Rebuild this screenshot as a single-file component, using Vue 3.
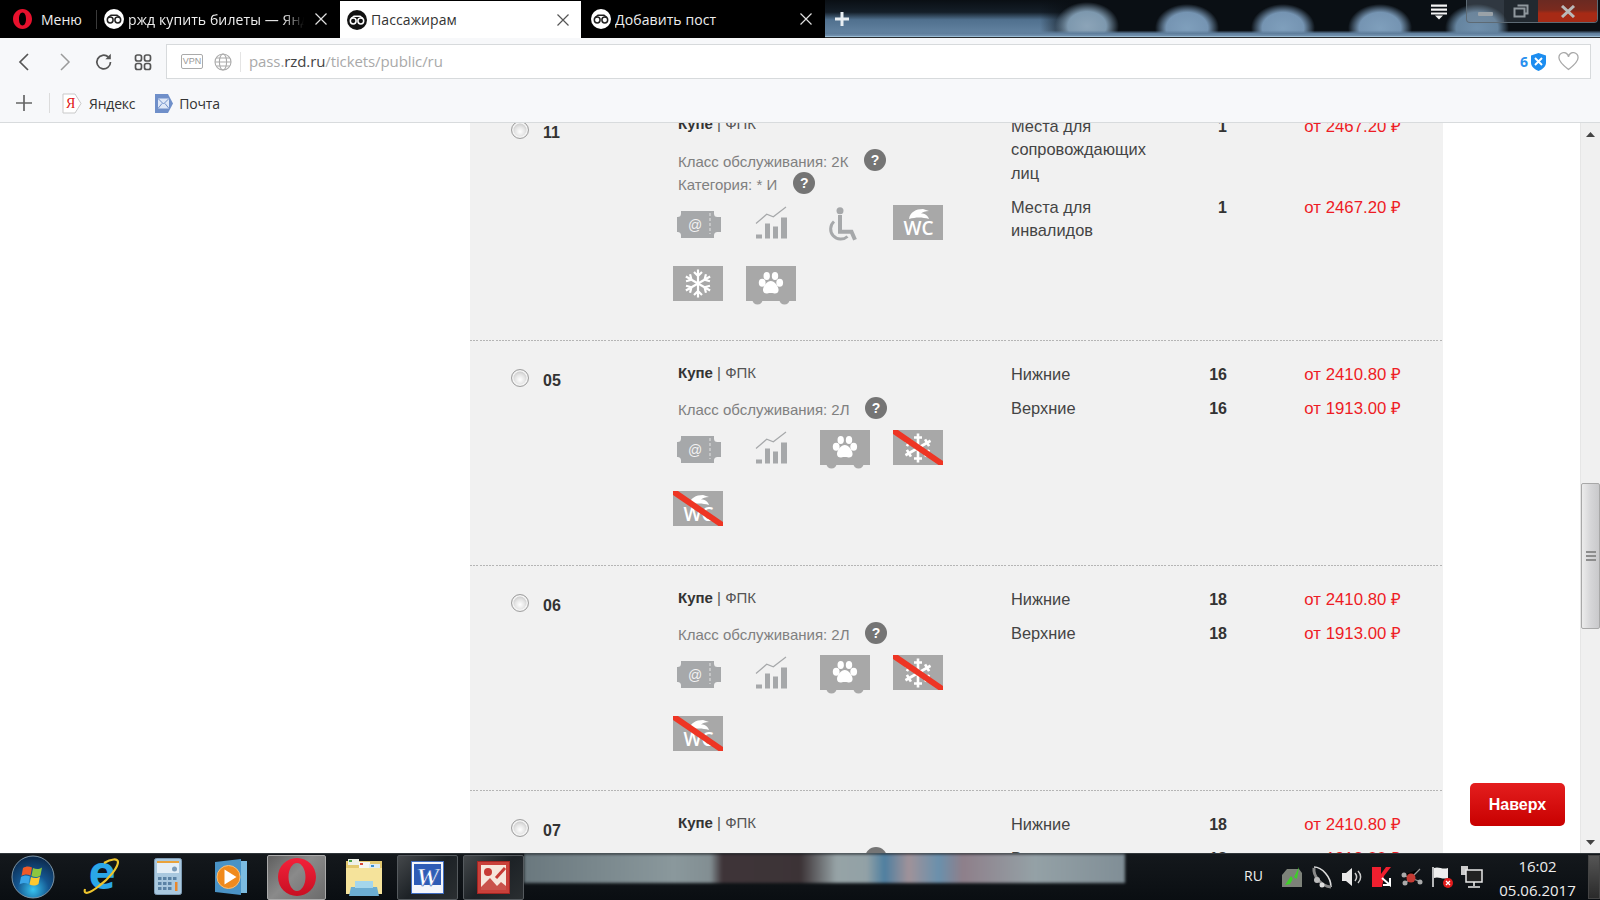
<script setup>
const tabs = [
  { title: 'ржд купить билеты — Янд', cls: 'tab-dark tab-first' },
  { title: 'Пассажирам', cls: 'tab-active' },
  { title: 'Добавить пост', cls: 'tab-dark tab-last' },
]
const rows = [
  {
    no: '11', cat: true, klass: '2К',
    icons: ['ticket', 'chart', 'chair', 'wc', 'snow', 'paw'],
    seats: [
      { name: 'Места для сопровождающих лиц', n: '1', price: 'от 2467.20 ₽' },
      { name: 'Места для инвалидов', n: '1', price: 'от 2467.20 ₽' },
    ],
  },
  {
    no: '05', klass: '2Л',
    icons: ['ticket', 'chart', 'paw', 'nosnow', 'nowc'],
    seats: [
      { name: 'Нижние', n: '16', price: 'от 2410.80 ₽' },
      { name: 'Верхние', n: '16', price: 'от 1913.00 ₽' },
    ],
  },
  {
    no: '06', klass: '2Л',
    icons: ['ticket', 'chart', 'paw', 'nosnow', 'nowc'],
    seats: [
      { name: 'Нижние', n: '18', price: 'от 2410.80 ₽' },
      { name: 'Верхние', n: '18', price: 'от 1913.00 ₽' },
    ],
  },
  {
    no: '07', klass: '2Л',
    icons: ['ticket', 'chart', 'paw', 'nosnow', 'nowc'],
    seats: [
      { name: 'Нижние', n: '18', price: 'от 2410.80 ₽' },
      { name: 'Верхние', n: '18', price: 'от 1913.00 ₽' },
    ],
  },
]
const flakeArms = [0, 60, 120, 180, 240, 300]
</script>

<template>
  <div class="screen">
    <header class="tabstrip">
      <div class="menu">
        <svg width="19" height="20" viewBox="0 0 19 20"><path fill-rule="evenodd" d="M9.500 0C14.700 0 19 4.500 19 10s-4.300 10-9.500 10S0 15.500 0 10 4.300 0 9.500 0zm0 3.500C7.300 3.500 6 6.400 6 10s1.300 6.500 3.500 6.500S13 13.600 13 10s-1.300-6.500-3.500-6.500z" fill="#e8112d"/></svg>
        <span>Меню</span>
        <i class="tab-sep"></i>
      </div>
      <div v-for="t in tabs" :key="t.title" class="tab" :class="t.cls">
        <svg class="fav" width="20" height="20" viewBox="0 0 20 20">
          <circle cx="10" cy="10" r="10" class="fav-bg"/>
          <circle cx="6.200" cy="11" r="2.900" class="fav-eye"/>
          <circle cx="13.800" cy="11" r="2.900" class="fav-eye"/>
          <path d="M4 8.500 7 6.200h6l3 2.300" class="fav-eye"/>
        </svg>
        <span class="tab-title">{{ t.title }}</span>
        <svg class="tab-x" width="14" height="14" viewBox="0 0 14 14"><path d="M1.500 1.500l11 11M12.500 1.500l-11 11" fill="none" stroke-width="1.200"/></svg>
      </div>
      <div class="wall">
        <svg class="newtab" width="14" height="14" viewBox="0 0 14 14"><path d="M7 0v14M0 7h14" stroke="#e8eef2" stroke-width="3"/></svg>
        <svg class="tabmenu" width="18" height="16" viewBox="0 0 18 16"><path d="M1 .5h16v2.200H1zM1 4.500h16v2.200H1zM1 8.500h16v2H1zM5 11.500h8l-4 4z" fill="#f4f4f4"/></svg>
        <div class="winctl">
          <div class="wc-min"><i></i></div>
          <div class="wc-max"><svg width="16" height="14" viewBox="0 0 16 14"><path d="M4.500 1.500h10v8h-2M1.500 4.500h10v8h-10z" fill="none" stroke="#8f979d" stroke-width="2"/></svg></div>
          <div class="wc-close"><svg width="16" height="13" viewBox="0 0 16 13"><path d="M2 1l12 11M14 1 2 12" stroke="#b9b9b9" stroke-width="3"/></svg></div>
        </div>
      </div>
    </header>

    <div class="toolbar">
      <div class="navs">
        <svg width="12" height="18" viewBox="0 0 12 18"><path d="M10 1 2 9l8 8" fill="none" stroke="#555" stroke-width="1.700"/></svg>
        <svg width="12" height="18" viewBox="0 0 12 18"><path d="M2 1l8 8-8 8" fill="none" stroke="#9a9a9a" stroke-width="1.500"/></svg>
        <svg width="18" height="18" viewBox="0 0 18 18"><path d="M15.500 9a6.800 6.800 0 1 1-2.200-5" fill="none" stroke="#555" stroke-width="1.700"/><path d="M15.800 .8v5.400h-5.400z" fill="#555"/></svg>
        <svg width="18" height="18" viewBox="0 0 18 18"><g fill="none" stroke="#555" stroke-width="1.700"><rect x="1.500" y="2" width="6" height="6" rx="2"/><rect x="10.500" y="2" width="6" height="6" rx="2"/><rect x="1.500" y="10.500" width="6" height="6" rx="2"/><rect x="10.500" y="10.500" width="6" height="6" rx="2"/></g></svg>
      </div>
      <div class="address">
        <span class="vpn">VPN</span>
        <svg width="18" height="18" viewBox="0 0 18 18"><g fill="none" stroke="#aaa" stroke-width="1.100"><circle cx="9" cy="9" r="8"/><ellipse cx="9" cy="9" rx="3.600" ry="8"/><path d="M1 9h16M2.200 5h13.600M2.200 13h13.600"/></g></svg>
        <i class="addr-sep"></i>
        <span class="url">pass.<b>rzd.ru</b>/tickets/public/ru</span>
        <span class="badge-n">6</span>
        <svg width="15" height="18" viewBox="0 0 15 18"><path d="M7.500 0 15 2.500v7c0 4-3.200 6.800-7.500 8.500C3.200 16.300 0 13.500 0 9.500v-7z" fill="#1c8df0"/><path d="M4 5l7 7M11 5l-7 7" stroke="#fff" stroke-width="1.900"/></svg>
        <svg class="heart" width="21" height="19" viewBox="0 0 21 19"><path d="M10.500 17.500C4 12.500 1 9.500 1 6a4.700 4.700 0 0 1 9.500-1.200A4.700 4.700 0 0 1 20 6c0 3.500-3 6.500-9.500 11.500z" fill="none" stroke="#a9a9a9" stroke-width="1.300"/></svg>
      </div>
    </div>

    <div class="bookmarks">
      <svg width="16" height="16" viewBox="0 0 16 16"><path d="M8 0v16M0 8h16" stroke="#666" stroke-width="1.700"/></svg>
      <i class="bm-sep"></i>
      <div class="bm">
        <svg width="20" height="21" viewBox="0 0 20 21"><path d="M1 1h12l6 9.500-6 9.500H1z" fill="#fff" stroke="#c9c9c9"/></svg>
        <em class="ya">Я</em>
        <span>Яндекс</span>
      </div>
      <div class="bm bm-mail">
        <svg width="20" height="21" viewBox="0 0 20 21"><path d="M1 1h13l5 9.500-5 9.500H1z" fill="#6f8fc9"/><rect x="4" y="5.500" width="11" height="10" fill="#dfe8f7"/><path d="M4 5.500l5.500 5.500L15 5.500M4 15.500 8 10.500M15 15.500l-4-5" fill="none" stroke="#6f8fc9"/></svg>
        <span>Почта</span>
      </div>
    </div>

    <main class="viewport">
      <div class="page">
        <div class="list">
          <section v-for="r in rows" :key="r.no" class="row">
            <div class="car">
              <i class="radio"></i>
              <b class="car-no">{{ r.no }}</b>
            </div>
            <div class="info">
              <p class="title"><b>Купе</b> | ФПК</p>
              <p class="klass">
                <span>Класс обслуживания: {{ r.klass }}</span>
                <i class="help">?</i>
              </p>
              <p v-if="r.cat" class="klass cat">
                <span>Категория: * И</span>
                <i class="help">?</i>
              </p>
              <div class="icons">
                <div v-for="ic in r.icons" :key="ic" class="ic">
                  <svg width="50" height="40" viewBox="0 0 50 40">
                    <template v-if="ic === 'ticket'">
                      <path d="M8 6h33v2.500a3.500 3.500 0 0 0 3.500 3.500H48v15h-3.500a3.500 3.500 0 0 0-3.500 3.500V33H8v-2.500A3.500 3.500 0 0 0 4.500 27H4V12h.5A3.500 3.500 0 0 0 8 8.500z" fill="#a6a8aa"/>
                      <text x="22" y="25" text-anchor="middle" class="at">@</text>
                      <path d="M37 8v21" stroke="#e4e4e4" stroke-width="1" stroke-dasharray="3 2"/>
                    </template>
                    <template v-else-if="ic === 'chart'">
                      <path d="M10 18.500 20.700 9.300l6.600 2.400L40 2" fill="none" stroke="#a6a8aa" stroke-width="1.200"/>
                      <path d="M10 29.500h6V33.500h-6zM19 18.500h5V33.500h-5zM27 21.500h5V33.500h-5zM35 12.500h6V33.500h-6z" fill="#a6a8aa"/>
                    </template>
                    <template v-else-if="ic === 'chair'">
                      <circle cx="20" cy="5.800" r="3.500" fill="#a6a8aa"/>
                      <path d="M20 10v16.700h11.500l3.500 8" fill="none" stroke="#a6a8aa" stroke-width="4"/>
                      <path d="M14 16.500a10 10 0 1 0 13.500 15" fill="none" stroke="#a6a8aa" stroke-width="3"/>
                    </template>
                    <template v-else-if="ic === 'paw'">
                      <rect x="0" y="0" width="50" height="35" fill="#a8a8a8"/>
                      <path d="M6.500 34h10a5 4.500 0 0 1-10 0zM33.500 34h10a5 4.500 0 0 1-10 0z" fill="#a8a8a8"/>
                      <g fill="#fff">
                        <ellipse cx="16.200" cy="16.700" rx="3.400" ry="4"/>
                        <ellipse cx="20.700" cy="10" rx="3.200" ry="4"/>
                        <ellipse cx="29" cy="10" rx="3.200" ry="4"/>
                        <ellipse cx="33.700" cy="16.700" rx="3.400" ry="4"/>
                        <path d="M24.800 15c3.500 0 7.800 5 7.800 9 0 3-2.600 3.900-5 3.300-1.800-.5-3.800-.5-5.600 0-2.400.6-5-.3-5-3.300 0-4 4.300-9 7.800-9z"/>
                      </g>
                    </template>
                    <template v-else-if="ic === 'snow'">
                      <rect x="0" y="0" width="50" height="35" fill="#a8a8a8"/>
                      <g fill="none" stroke="#fff" stroke-width="2.200">
                        <g v-for="a in flakeArms" :key="a" :transform="`rotate(${a} 25 17.500)`">
                          <path d="M25 17.500V3.500M21 6l4 4 4-4"/>
                        </g>
                      </g>
                    </template>
                    <template v-else-if="ic === 'nosnow'">
                      <rect x="0" y="0" width="50" height="35" fill="#a8a8a8"/>
                      <g fill="none" stroke="#fff" stroke-width="2.600">
                        <g v-for="a in flakeArms" :key="a" :transform="`rotate(${a} 25 18)`">
                          <path d="M25 18V3.500M21 7.500h8"/>
                        </g>
                      </g>
                      <path d="M0 0h5l45 31v4h-4.500L0 4z" fill="#ee3524"/>
                    </template>
                    <template v-else>
                      <rect x="0" y="0" width="50" height="35" fill="#a8a8a8"/>
                      <path d="M16 14c1-7 7-10 14-10l6 2c-4 0-6 1-8 2.500 4 0 7 2 8 5.500-7-2-13-2-20 0z" fill="#fff"/>
                      <text x="25.500" y="30" text-anchor="middle" class="wc-text">WC</text>
                      <path v-if="ic === 'nowc'" d="M0 0h5l45 31v4h-4.500L0 4z" fill="#ee3524"/>
                    </template>
                  </svg>
                </div>
              </div>
            </div>
            <div class="seats">
              <div v-for="s in r.seats" :key="s.name" class="seat">
                <span class="s-name">{{ s.name }}</span>
                <b class="s-n">{{ s.n }}</b>
                <span class="s-price">{{ s.price }}</span>
              </div>
            </div>
          </section>
        </div>
      </div>
      <div class="scrollbar">
        <svg class="sb-up" width="9" height="5" viewBox="0 0 9 5"><path d="M4.500 0 9 5H0z" fill="#444"/></svg>
        <div class="thumb"><i></i><i></i><i></i></div>
        <svg class="sb-down" width="9" height="5" viewBox="0 0 9 5"><path d="M0 0h9L4.500 5z" fill="#444"/></svg>
      </div>
      <button class="totop">Наверх</button>
    </main>

    <footer class="taskbar">
      <div class="orb">
        <svg width="44" height="44" viewBox="0 0 44 44">
          <defs>
            <radialGradient id="orbg" cx=".5" cy=".8" r=".75"><stop offset="0" stop-color="#37c4f0"/><stop offset=".5" stop-color="#14558f"/><stop offset="1" stop-color="#0c2c50"/></radialGradient>
          </defs>
          <circle cx="22" cy="22" r="21" fill="url(#orbg)" stroke="#7d95a6" stroke-width="1"/>
          <path d="M12 13c3-2 6-2 9-.5l-1.500 8c-3-1.500-6-1.500-9 .5z" fill="#ef5a28"/>
          <path d="M22 13c3 1.500 6 1.500 9-.5l-1.500 8c-3 2-6 2-9 .5z" fill="#8cc63f"/>
          <path d="M10 22c3-2 6-2 9-.5L17.500 29c-3-1.500-6-1.500-9 .5z" fill="#3aa5e8"/>
          <path d="M20 22c3 1.500 6 1.500 9-.5L27.500 29c-3 2-6 2-9 .5z" fill="#fdc82f"/>
        </svg>
      </div>
      <div class="tb-ic ie">
        <svg width="40" height="42" viewBox="0 0 40 42">
          <text x="20" y="33" text-anchor="middle" class="ie-e">e</text>
          <path d="M3 33C1 39 7 38 17 30 28 22 36 11 36 6c0-4-7-3-14 1" fill="none" stroke="#edc42d" stroke-width="2.200"/>
        </svg>
      </div>
      <div class="tb-ic calc">
        <svg width="28" height="37" viewBox="0 0 28 37">
          <rect x=".5" y=".5" width="27" height="36" rx="2" fill="#a9c8df" stroke="#7e9cb4"/>
          <rect x="3" y="3" width="22" height="2" fill="#e9a23b"/>
          <rect x="3" y="5" width="22" height="10" fill="#e3eef7"/>
          <circle cx="20.500" cy="11" r="2.500" fill="#7a9bb8"/>
          <g fill="#5a82a5">
            <rect x="4" y="19" width="3.500" height="3"/><rect x="9" y="19" width="3.500" height="3"/><rect x="14" y="19" width="3.500" height="3"/><rect x="19" y="19" width="3.500" height="3"/>
            <rect x="4" y="24" width="3.500" height="3"/><rect x="9" y="24" width="3.500" height="3"/><rect x="14" y="24" width="3.500" height="3"/>
            <rect x="4" y="29" width="3.500" height="3"/><rect x="9" y="29" width="3.500" height="3"/><rect x="14" y="29" width="3.500" height="3"/>
          </g>
          <rect x="21" y="24" width="2.500" height="9" fill="#e9872b"/>
        </svg>
      </div>
      <div class="tb-ic wmp">
        <svg width="32" height="36" viewBox="0 0 32 36">
          <path d="M0 3 26 0v36L0 33z" fill="#4a93c6"/>
          <path d="M26 2h6v32h-6z" fill="#7bbbe0"/>
          <circle cx="13.500" cy="18" r="11.500" fill="#f08a1d" stroke="#f7c07c" stroke-width="1"/>
          <path d="M9.500 10.500 21.500 18l-12 7.500z" fill="#fff"/>
        </svg>
      </div>
      <div class="tb-btn tb-opera">
        <svg width="38" height="38" viewBox="0 0 38 38">
          <defs><linearGradient id="opg" x1="0" y1="0" x2="0" y2="1"><stop offset="0" stop-color="#f3213a"/><stop offset="1" stop-color="#c80f22"/></linearGradient></defs>
          <path fill-rule="evenodd" d="M19 0c10.500 0 19 8.500 19 19s-8.500 19-19 19S0 29.500 0 19 8.500 0 19 0zm0 5c-4.700 0-8.500 6.300-8.500 14s3.800 14 8.500 14 8.500-6.300 8.500-14S23.700 5 19 5z" fill="url(#opg)"/>
        </svg>
      </div>
      <div class="tb-ic folder">
        <svg width="38" height="38" viewBox="0 0 38 38">
          <path d="M1 3h36v33H1z" fill="#e3c970"/>
          <rect x="3" y="1" width="11" height="6" fill="#eef0e6"/><rect x="4" y="2" width="3" height="2" fill="#4aa34a"/>
          <rect x="14" y="4" width="11" height="6" fill="#f6f6f2"/><rect x="15" y="5" width="3" height="2" fill="#d9483a"/>
          <rect x="24" y="6" width="11" height="6" fill="#dcebf2"/><rect x="26" y="7" width="3" height="2" fill="#3a8fd0"/>
          <path d="M1 10h36v26H1z" fill="#f5e39b"/>
          <path d="M6 29h26l2 9H4z" fill="#6cadd2"/>
          <path d="M10 23h18v7H10z" fill="#a4d6ec"/>
        </svg>
      </div>
      <div class="tb-btn tb-word">
        <svg width="33" height="33" viewBox="0 0 33 33">
          <rect x=".5" y=".5" width="32" height="32" fill="#f4f6fb" stroke="#3f6cc0"/>
          <rect x="3" y="3" width="27" height="21" fill="#2e5cb6"/>
          <text x="16.500" y="25" text-anchor="middle" class="word-w">W</text>
        </svg>
      </div>
      <div class="tb-btn tb-pic">
        <svg width="33" height="33" viewBox="0 0 33 33">
          <rect x=".5" y=".5" width="32" height="32" fill="#c9403a" stroke="#a32523"/>
          <rect x="4" y="4" width="25" height="25" fill="#f6e6dc"/>
          <circle cx="11" cy="11" r="4" fill="#c73a35"/>
          <path d="M4 29V26L13 17l7 8 4-4 5 4v4z" fill="#c9524b"/>
          <path d="M19 17l9-10" stroke="#c73a35" stroke-width="3"/>
        </svg>
      </div>
      <div class="taskwall"><div class="taskband"></div></div>
      <div class="tray">
        <span class="lang">RU</span>
        <span class="tr"><svg width="24" height="24" viewBox="0 0 24 24"><path d="M2 10 7 4h12l3 4v14H2z" fill="#7d8279"/><path d="M5 20 11 11l2 3 6-12-2 12-3-2-4 7z" fill="#3ed029"/></svg></span>
        <span class="tr"><svg width="22" height="24" viewBox="0 0 22 24"><path d="M3 2c8 0 17 10 17 20" fill="none" stroke="#ddd" stroke-width="1.600"/><path d="M3 3c-1 8 7 18 17 19" fill="none" stroke="#888" stroke-width="3"/><circle cx="6" cy="15" r="3" fill="#bbb"/><circle cx="11" cy="20" r="2.500" fill="#ddd"/></svg></span>
        <span class="tr"><svg width="24" height="24" viewBox="0 0 24 24"><path d="M2 8h4l6-5v18l-6-5H2z" fill="#e8e8e8"/><path d="M15 8c2 2.500 2 5.500 0 8M18 6c3.500 3.500 3.500 8.500 0 12" fill="none" stroke="#ccc" stroke-width="1.500"/></svg></span>
        <span class="tr"><svg width="20" height="20" viewBox="0 0 20 20"><path d="M0 0h9v7l5-7h5l-7 9-2 11H0z" fill="#ef1f2f"/><path d="M10 11l8 7v-7M18 18h-7" fill="none" stroke="#fff" stroke-width="2"/></svg></span>
        <span class="tr"><svg width="24" height="20" viewBox="0 0 24 20"><path d="M3 8l8 3 9-9M11 11l-7 6M11 11l10 4" stroke="#999" stroke-width="1.300"/><circle cx="11" cy="11" r="4.500" fill="#c53a33"/><circle cx="4" cy="8" r="2.500" fill="#aaa"/><circle cx="20" cy="15" r="2.500" fill="#aaa"/><circle cx="5" cy="16" r="2.500" fill="#aaa"/></svg></span>
        <span class="tr"><svg width="24" height="24" viewBox="0 0 24 24"><path d="M3 2v20" stroke="#eee" stroke-width="1.500"/><path d="M4 3c5-2 8 2 14 0v10c-6 2-9-2-14 0z" fill="#eee"/><circle cx="18" cy="18" r="5" fill="#e21c1c"/><path d="M16 16l4 4M20 16l-4 4" stroke="#fff" stroke-width="1.300"/></svg></span>
        <span class="tr"><svg width="24" height="24" viewBox="0 0 24 24"><rect x="1" y="1" width="7" height="9" fill="#ccc"/><rect x="6" y="5" width="16" height="12" fill="#222" stroke="#e8e8e8" stroke-width="1.500"/><path d="M14 17v4M8 22h12" stroke="#e8e8e8" stroke-width="1.600"/></svg></span>
        <div class="clock"><span>16:02</span><span>05.06.2017</span></div>
        <i class="showdesk"></i>
      </div>
    </footer>
  </div>
</template>

<style>
html, body { margin: 0; background: #fff; overflow: hidden; }
</style>

<style scoped>
.screen { width: 1600px; height: 900px; display: flex; flex-direction: column; font-family: "Liberation Sans", Arial, sans-serif; overflow: hidden; position: relative; }
p { margin: 0; }
i, em { font-style: normal; }

.tabstrip { height: 38px; flex: none; display: flex; background: #000; color: #eee; font-family: "Open Sans", "Liberation Sans", sans-serif; font-size: 14px; }
.menu { width: 97px; flex: none; display: flex; align-items: center; padding-left: 13px; box-sizing: border-box; gap: 9px; position: relative; color: #eee; }
.tab-sep { position: absolute; right: 0; top: 10px; height: 19px; width: 1px; background: #3a3a3a; }
.tab { display: flex; align-items: center; box-sizing: border-box; position: relative; flex: none; letter-spacing: .1px; }
.tab-first { width: 243px; padding-left: 7px; }
.tab-active { width: 241px; background: #fff; color: #333; margin-top: 1px; padding-left: 7px; }
.tab-last { width: 244px; padding-left: 10px; }
.fav { flex: none; margin-right: 4px; }
.fav-bg { fill: #fff; }
.fav-eye { fill: none; stroke: #222; stroke-width: 1.500; }
.tab-active .fav-bg { fill: #111; }
.tab-active .fav-eye { stroke: #fff; }
.tab-title { white-space: nowrap; overflow: hidden; width: 176px; }
.tab-first .tab-title { -webkit-mask-image: linear-gradient(90deg, #000 88%, transparent); mask-image: linear-gradient(90deg, #000 88%, transparent); }
.tab-x { position: absolute; right: 12px; top: 12px; stroke: #e0e0e0; }
.tab-active .tab-x { right: 11px; stroke: #555; }
.wall { flex: 1; display: flex; align-items: center; background:
  linear-gradient(transparent 80%, #5f7e9c 88%, #7493b0 95%, #9bbcd4 96%, #9bbcd4 97%, #2a2d30 98%),
  radial-gradient(ellipse 32px 24px at 362px 28px, #7f9fbc 0, #7594b2 65%, rgba(110,144,173,0) 100%),
  radial-gradient(ellipse 32px 24px at 458px 28px, #7f9fbc 0, #7594b2 65%, rgba(110,144,173,0) 100%),
  radial-gradient(ellipse 32px 24px at 555px 28px, #7f9fbc 0, #7594b2 65%, rgba(110,144,173,0) 100%),
  radial-gradient(ellipse 32px 24px at 652px 28px, #6f8fac 0, #65849f 65%, rgba(110,144,173,0) 100%),
  radial-gradient(ellipse 32px 24px at 262px 26px, #8ca4b8 0, #7d98ae 60%, rgba(110,144,173,0) 100%),
  linear-gradient(90deg, rgba(0,0,0,0) 0, rgba(0,0,0,0) 215px, #0a0f14 250px),
  linear-gradient(#0a0f14 0, #141e28 32%, #50708e 52%, #6a8aa8 100%); }
.newtab { margin-left: 10px; flex: none; }
.tabmenu { margin: 4px 0 0 auto; align-self: flex-start; flex: none; }
.winctl { margin: 0 2px 0 18px; align-self: flex-start; width: 132px; height: 23px; flex: none; display: flex; border: 1px solid #5d6a74; border-top: 0; border-radius: 0 0 4px 4px; box-sizing: border-box; overflow: hidden; }
.winctl > div { display: flex; align-items: center; justify-content: center; }
.wc-min { width: 37px; background: rgba(120,135,150,.35); }
.wc-min i { width: 15px; height: 4px; background: #9aa2a8; border-radius: 1px; margin-top: 5px; }
.wc-max { width: 34px; background: rgba(70,80,90,.4); }
.wc-close { flex: 1; background: linear-gradient(#6b2a22 0, #7a2a1e 45%, #a72a15 60%); }

.toolbar { height: 44px; flex: none; display: flex; background: #f7f8fa; padding-top: 6px; box-sizing: border-box; }
.navs { width: 166px; flex: none; display: flex; align-items: center; height: 35px; padding-left: 18px; box-sizing: border-box; }
.navs svg:nth-child(1) { margin-right: 29px; }
.navs svg:nth-child(2) { margin-right: 24px; }
.navs svg:nth-child(3) { margin-right: 21px; }
.address { width: 1425px; height: 35px; flex: none; background: #fff; border: 1px solid #d7dadc; box-sizing: border-box; display: flex; align-items: center; padding-left: 14px; font-size: 15px; }
.vpn { width: 22px; height: 15px; border: 1px solid #aaa; border-radius: 2px; box-sizing: border-box; font-size: 9px; line-height: 13px; text-align: center; color: #999; margin-right: 11px; }
.addr-sep { width: 1px; height: 20px; background: #e4e4e4; margin: 0 8px; }
.url { color: #a9a9a9; flex: 1; font-family: "Open Sans", sans-serif; font-size: 15px; letter-spacing: -.1px; padding-bottom: 2px; }
.url b { font-weight: 400; color: #444; }
.badge-n { color: #2a90ee; font-size: 14px; font-weight: 700; margin-right: 3px; font-family: "Open Sans", sans-serif; }
.heart { margin: 0 11px 0 12px; }

.bookmarks { height: 41px; flex: none; background: #f7f8fa; border-bottom: 1px solid #d8dbdd; display: flex; align-items: center; padding: 2px 0 0 16px; font-family: "Open Sans", sans-serif; font-size: 14px; color: #333; letter-spacing: -.2px; box-sizing: border-box; }
.bm-sep { width: 1px; height: 20px; background: #dcdcdc; margin: 0 12px 0 17px; }
.bm { display: flex; align-items: center; gap: 7px; position: relative; }
.bm-mail { margin-left: 19px; gap: 5px; }
.ya { position: absolute; left: 4px; top: 0; line-height: 21px; color: #e01010; font-size: 14px; font-family: "Liberation Serif", serif; }

.viewport { flex: 1; min-height: 0; display: flex; overflow: hidden; position: relative; background: #fff; }
.page { flex: 1; min-width: 0; padding-left: 470px; box-sizing: border-box; overflow: hidden; }
.list { width: 973px; margin-top: -30.500px; background: #f1f1f1; font-size: 15px; }
.row { display: grid; grid-template-columns: 203px 338px 1fr; padding-bottom: 14px; background: repeating-linear-gradient(90deg, #b5b5b5 0 2px, transparent 2px 3.200px) left bottom / 100% 1px no-repeat; }
.car { display: flex; align-items: flex-start; padding: 28px 0 0 41px; box-sizing: border-box; }
.radio { width: 18px; height: 18px; border-radius: 50%; box-sizing: border-box; border: 1px solid #a0a0a0; box-shadow: inset 0 0 0 1.500px #f4f4f4; background: radial-gradient(circle at 50% 60%, #fff 0, #e4e4e4 40%, #b9b9b9 85%); flex: none; }
.car-no { margin: 2px 0 0 14px; font-size: 16px; line-height: 20px; color: #333; }
.title { padding: 22.500px 0 0 5px; line-height: 17px; font-size: 15px; color: #555; }
.title b { color: #333; }
.klass { padding: 17.500px 0 0 5px; line-height: 23.500px; color: #808080; display: flex; align-items: center; font-size: 15px; }
.cat { padding-top: 0; }
.help { width: 22px; height: 22px; border-radius: 50%; background: #757575; color: #fff; font-weight: 700; font-size: 14px; line-height: 22px; text-align: center; margin: -3px 0 0 15.500px; flex: none; }
.cat .help { margin-left: 16px; }
.icons { display: flex; flex-wrap: wrap; width: 294px; margin-top: 8.500px; }
.ic { width: 73.300px; height: 61px; flex: none; }
.ic svg { display: block; overflow: visible; }
.at { font: 14px "Liberation Sans", sans-serif; fill: #f2f2f2; }
.wc-text { font: 600 19px "Open Sans", sans-serif; fill: #fff; }
.seats { padding: 22px 42px 0 0; display: flex; flex-direction: column; gap: 10.500px; }
.seat { display: grid; grid-template-columns: 147px 69px 1fr; line-height: 23.500px; color: #444; font-size: 16.400px; }
.s-name { width: 145px; }
.s-n { text-align: right; color: #333; font-size: 16px; }
.s-price { color: #ee1c25; text-align: right; white-space: nowrap; font-size: 16.800px; }

.scrollbar { width: 20px; flex: none; background: #f0f0f0; border-left: 1px solid #e6e6e6; box-sizing: border-box; position: relative; display: flex; flex-direction: column; align-items: center; }
.sb-up { margin-top: 9px; flex: none; }
.thumb { margin-top: 346px; width: 19px; height: 146px; box-sizing: border-box; border: 1px solid #a8a8a8; border-radius: 2px; background: linear-gradient(90deg, #ececec, #d6d6d8 50%, #c9c9cb); display: flex; flex-direction: column; justify-content: center; align-items: center; gap: 2px; flex: none; }
.thumb i { width: 10px; height: 2px; background: #8d8d8d; }
.sb-down { margin-top: auto; margin-bottom: 8px; flex: none; }
.totop { position: absolute; left: 1470px; top: 660px; width: 95px; height: 43px; border: 0; border-radius: 5px; background: linear-gradient(#e41e1e, #c80000); color: #fff; font: 700 16px "Liberation Sans", sans-serif; padding: 0; }

.taskbar { height: 47px; flex: none; display: flex; align-items: center; position: relative; background: linear-gradient(#3f464b 0, #14181c 3%, #0a0e12 100%); }
.orb { width: 44px; margin-left: 11px; display: flex; flex: none; }
.tb-ic { display: flex; justify-content: center; flex: none; }
.ie { width: 40px; margin-left: 27px; }
.ie-e { font: 700 46px "Open Sans", sans-serif; fill: #2aa7e8; }
.calc { width: 28px; margin-left: 32px; }
.wmp { width: 32px; margin-left: 33px; }
.tb-btn { height: 45px; margin-top: 1px; box-sizing: border-box; display: flex; align-items: center; justify-content: center; border: 1px solid #555a5e; border-radius: 2px; flex: none; }
.tb-opera { width: 59px; margin-left: 20px; background: linear-gradient(135deg, #5f5f5f, #8a8a8a 45%, #6b6b6b); border-color: #aaa; }
.folder { width: 38px; margin-left: 19px; }
.tb-word { width: 61px; margin-left: 14px; background: linear-gradient(135deg, #44484b, #1d2226 50%, #2a2e31); }
.tb-pic { width: 61px; margin-left: 5px; background: linear-gradient(135deg, #44484b, #1d2226 50%, #2a2e31); }
.word-w { font: italic 700 26px "Liberation Serif", serif; fill: #fff; stroke: #2e5cb6; stroke-width: .6px; }
.taskwall { flex: 1; height: 100%; overflow: hidden; }
.taskband { width: 601px; height: 29px; margin-top: 1px; filter: blur(1.500px); background: linear-gradient(90deg, #6a787e 0, #8a989c 25%, #828e92 31%, #3e3438 33%, #3c3336 46%, #96a3a6 52%, #92a1a6 57%, #4f7fa0 60%, #a09299 64%, #6a90ac 69%, #8e7f8a 73%, #94a1a6 85%, #808e96 100%); }
.tray { display: flex; align-items: center; height: 100%; color: #eee; width: 370px; box-sizing: border-box; flex: none; font: 14px "Open Sans", sans-serif; }
.lang { width: 47px; padding-left: 14px; box-sizing: border-box; flex: none; margin-top: -3px; }
.tr { width: 30px; display: flex; align-items: center; justify-content: center; flex: none; }
.clock { display: flex; flex-direction: column; align-items: center; width: 101px; line-height: 24px; font-size: 15px; padding-top: 2px; flex: none; }
.showdesk { width: 12px; height: 44px; background: linear-gradient(#555, #2a2a2a); border: 1px solid #444; box-sizing: border-box; flex: none; }
</style>
